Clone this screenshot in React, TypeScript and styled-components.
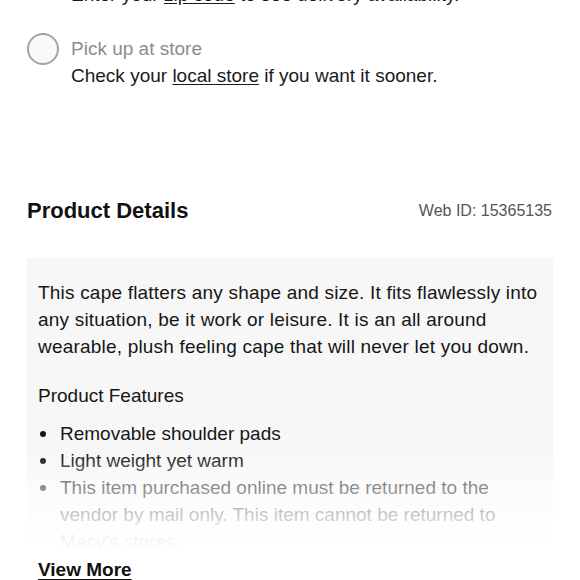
import React from "react";
import styled, { createGlobalStyle } from "styled-components";

const GlobalStyle = createGlobalStyle`
  html, body {
    margin: 0;
    padding: 0;
    background: #fff;
    overflow: hidden;
  }
  body {
    font-family: "Liberation Sans", Arial, sans-serif;
    color: #1a1a1a;
  }
`;

const Page = styled.div`
  width: 580px;
  height: 580px;
  overflow: hidden;
`;

const Inner = styled.div`
  padding: 0 27px;
  margin-top: -46px;
`;

const Option = styled.div<{ $space?: number }>`
  display: flex;
  align-items: flex-start;
  gap: 12px;
  margin-bottom: ${(p) => p.$space ?? 25}px;
`;

const Radio = styled.span`
  flex-shrink: 0;
  width: 28px;
  height: 28px;
  margin-top: -2px;
  border: 2px solid #a3a3a3;
  border-radius: 50%;
  background: #f9f9f9;
`;

const OptionText = styled.div`
  font-size: 19px;
  line-height: 27px;
`;

const OptionLabel = styled.div<{ $muted?: boolean }>`
  color: ${(p) => (p.$muted ? "#8c8c8c" : "#1a1a1a")};
`;

const Link = styled.span`
  text-decoration: underline;
  text-underline-offset: 2px;
`;

const DetailsHeader = styled.div`
  display: flex;
  justify-content: space-between;
  align-items: center;
  margin-top: 108px;
  height: 28px;
`;

const Title = styled.h2`
  margin: 0;
  font-size: 22px;
  font-weight: 700;
  color: #111;
`;

const WebId = styled.span`
  font-size: 16px;
  color: #555;
  margin-right: 1px;
`;

const Panel = styled.div`
  position: relative;
  margin-top: 33px;
  height: 291px;
  overflow: hidden;
  background: #f7f7f7;
  padding: 21px 11px 0;
  box-sizing: border-box;
  font-size: 19px;
  line-height: 27px;
  color: #161616;
`;

const Fade = styled.div`
  position: absolute;
  left: 0;
  right: 0;
  bottom: 0;
  height: 96px;
  background: linear-gradient(
    rgba(255, 255, 255, 0) 0%,
    rgba(255, 255, 255, 0.45) 30%,
    rgba(255, 255, 255, 0.72) 60%,
    rgba(255, 255, 255, 0.93) 85%,
    rgba(255, 255, 255, 0.98) 100%
  );
`;

const Paragraph = styled.p`
  margin: 0;
  letter-spacing: 0.2px;
`;

const SubTitle = styled.div`
  margin-top: 22px;
`;

const List = styled.ul`
  list-style: none;
  margin: 11px 0 0;
  padding: 0;
`;

const Item = styled.li`
  position: relative;
  padding-left: 22px;
  padding-right: 40px;

  &::before {
    content: "";
    position: absolute;
    left: 2px;
    top: 11px;
    width: 6px;
    height: 6px;
    border-radius: 50%;
    background: #161616;
  }
`;

const ViewMore = styled.a`
  display: inline-block;
  margin: 7px 0 0 11px;
  font-size: 19px;
  line-height: 27px;
  font-weight: 700;
  color: #111;
  text-decoration: underline;
  text-underline-offset: 3px;
  text-decoration-thickness: 1px;
  cursor: pointer;
`;

const features = [
  "Removable shoulder pads",
  "Light weight yet warm",
  "This item purchased online must be returned to the vendor by mail only. This item cannot be returned to Macy's stores.",
];

export default function App() {
  return (
    <Page>
      <GlobalStyle />
      <Inner>
        <Option $space={27}>
          <Radio />
          <OptionText>
            <OptionLabel $muted>Ship it</OptionLabel>
            <div>
              Enter your <Link>zip code</Link> to see delivery availability.
            </div>
          </OptionText>
        </Option>
        <Option>
          <Radio />
          <OptionText>
            <OptionLabel $muted>Pick up at store</OptionLabel>
            <div>
              Check your <Link>local store</Link> if you want it sooner.
            </div>
          </OptionText>
        </Option>

        <DetailsHeader>
          <Title>Product Details</Title>
          <WebId>Web ID: 15365135</WebId>
        </DetailsHeader>

        <Panel>
          <Paragraph>
            This cape flatters any shape and size. It fits flawlessly into any
            situation, be it work or leisure. It is an all around wearable,
            plush feeling cape that will never let you down.
          </Paragraph>
          <SubTitle>Product Features</SubTitle>
          <List>
            {features.map((f) => (
              <Item key={f}>{f}</Item>
            ))}
          </List>
          <Fade />
        </Panel>
        <ViewMore>View More</ViewMore>
      </Inner>
    </Page>
  );
}
